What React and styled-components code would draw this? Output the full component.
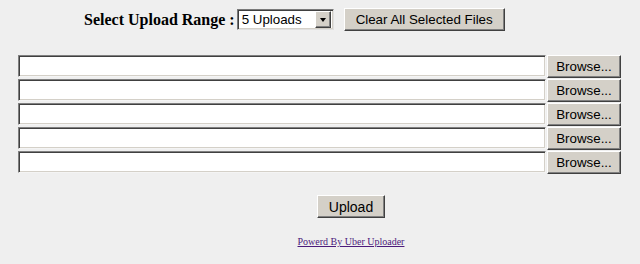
import * as React from "react"
import styled, { createGlobalStyle } from "styled-components"

const RANGE_LABEL = "Select Upload Range :",
  RANGE_VALUE = "5 Uploads",
  CLEAR_LABEL = "Clear All Selected Files",
  UPLOAD_LABEL = "Upload",
  CREDIT = "Powerd By Uber Uploader"

const SLOTS = [1, 2, 3, 4, 5]

const App = () => {
  return (
    <>
      <GlobalStyle />
      <Page>
        <Header>
          <Label>{RANGE_LABEL}</Label>
          <Select>
            <SelectValue>{RANGE_VALUE}</SelectValue>
            <SelectArrow />
          </Select>
          <Button width={161}>{CLEAR_LABEL}</Button>
        </Header>
        <Rows>
          {SLOTS.map((n) => (
            <Row key={n}>
              <Field />
              <Button width={74} height={23}>Browse...</Button>
            </Row>
          ))}
        </Rows>
        <Footer>
          <Button width={68} height={23} size={14}>{UPLOAD_LABEL}</Button>
          <Credit href="#">{CREDIT}</Credit>
        </Footer>
      </Page>
    </>
  )
}

const GlobalStyle = createGlobalStyle`
  html, body {
    margin: 0;
    background: #efefef;
  }
`

//Layout
const Page = styled.div`
  width: 640px;
  height: 264px;
  padding-top: 8px;
  box-sizing: border-box;
  display: flex;
  flex-direction: column;
`

const Header = styled.div`
  display: flex;
  align-items: center;
  height: 23px;
  padding-left: 84px;
`

const Label = styled.span`
  font-family: "Liberation Serif", "Times New Roman", serif;
  font-weight: bold;
  font-size: 16px;
  color: #000;
  margin-right: 2px;
`

const Select = styled.div`
  width: 97px;
  height: 21px;
  box-sizing: border-box;
  background: #fff;
  border-style: solid;
  border-width: 1px;
  border-color: #7a7a7a #e0e0e0 #e0e0e0 #7a7a7a;
  box-shadow: inset 1px 1px 0 #404040, inset -1px -1px 0 #d4d0c8;
  display: flex;
  align-items: center;
  padding: 2px;
  margin-right: 10px;
`

const SelectValue = styled.span`
  flex: 1;
  font-family: "Liberation Sans", Arial, sans-serif;
  font-size: 13.33px;
  color: #000;
  padding-left: 2px;
`

const SelectArrow = styled.span`
  width: 16px;
  height: 17px;
  box-sizing: border-box;
  background: #d4d0c8;
  border-style: solid;
  border-width: 1px;
  border-color: #fff #404040 #404040 #fff;
  box-shadow: inset -1px -1px 0 #808080;
  display: flex;
  align-items: center;
  justify-content: center;
  &::after {
    content: "";
    border-left: 3.5px solid transparent;
    border-right: 3.5px solid transparent;
    border-top: 4px solid #000;
    margin-top: 1px;
  }
`

const Button = styled.div`
  width: ${(p) => p.width}px;
  height: ${(p) => p.height || 23}px;
  box-sizing: border-box;
  background: #d4d0c8;
  border-style: solid;
  border-width: 1px;
  border-color: #fff #404040 #404040 #fff;
  box-shadow: inset -1px -1px 0 #808080;
  display: flex;
  align-items: center;
  justify-content: center;
  font-family: "Liberation Sans", Arial, sans-serif;
  font-size: ${(p) => p.size || 13.33}px;
  color: #000;
  white-space: nowrap;
  flex-shrink: 0;
`

const Rows = styled.div`
  display: flex;
  flex-direction: column;
  gap: 1px;
  margin-top: 24px;
  padding-left: 18px;
`

const Row = styled.div`
  display: flex;
  align-items: flex-start;
  gap: 1px;
  height: 23px;
`

const Field = styled.div`
  width: 528px;
  height: 22px;
  box-sizing: border-box;
  background: #fff;
  border-style: solid;
  border-width: 1px;
  border-color: #808080 #f4f4f4 #f4f4f4 #808080;
  box-shadow: inset 1px 1px 0 #404040, inset -1px -1px 0 #d4d0c8;
`

const Footer = styled.div`
  display: flex;
  flex-direction: column;
  align-items: center;
  width: 200px;
  margin-left: 251px;
  margin-top: 21px;
  gap: 18px;
`

const Credit = styled.a`
  font-family: "Liberation Serif", "Times New Roman", serif;
  font-size: 10px;
  color: #4b1a7b;
  text-decoration: underline;
`

export default App
